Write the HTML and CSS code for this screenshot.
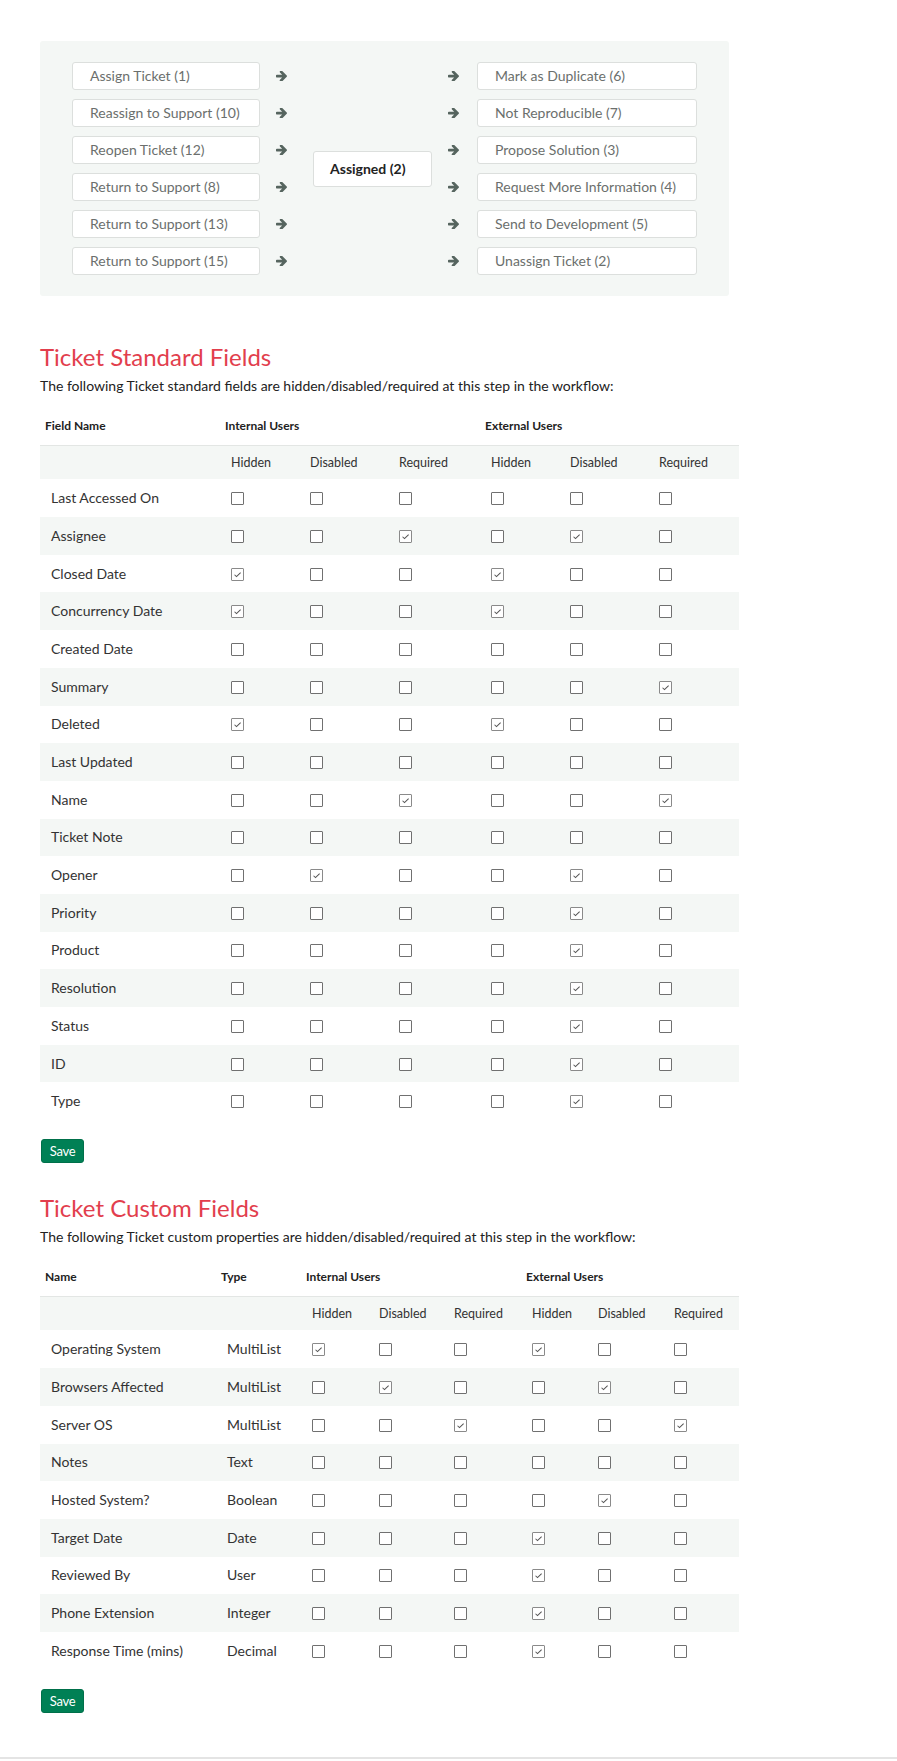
FILE: index.html
```html
<!DOCTYPE html>
<html>
<head>
<meta charset="utf-8">
<link rel="stylesheet" href="styles.css">
</head>
<body>
<div class="page">
  <div class="flow">
    <div class="col boxes left">
      <div class="box">Assign Ticket (1)</div>
      <div class="box">Reassign to Support (10)</div>
      <div class="box">Reopen Ticket (12)</div>
      <div class="box">Return to Support (8)</div>
      <div class="box">Return to Support (13)</div>
      <div class="box">Return to Support (15)</div>
    </div>
    <div class="col arrows a1">
      <div class="arr"><svg viewBox="0 144 1472 1376"><path d="M1472 832q0 54-37 91l-651 651q-39 37-91 37-51 0-90-37l-75-75q-38-38-38-91t38-91l293-293h-704q-52 0-84.5-37.5t-32.5-90.5v-128q0-53 32.5-90.5t84.5-37.5h704l-293-294q-38-36-38-90t38-90l75-75q38-38 90-38 53 0 91 38l651 651q37 35 37 90z"/></svg></div>
      <div class="arr"><svg viewBox="0 144 1472 1376"><path d="M1472 832q0 54-37 91l-651 651q-39 37-91 37-51 0-90-37l-75-75q-38-38-38-91t38-91l293-293h-704q-52 0-84.5-37.5t-32.5-90.5v-128q0-53 32.5-90.5t84.5-37.5h704l-293-294q-38-36-38-90t38-90l75-75q38-38 90-38 53 0 91 38l651 651q37 35 37 90z"/></svg></div>
      <div class="arr"><svg viewBox="0 144 1472 1376"><path d="M1472 832q0 54-37 91l-651 651q-39 37-91 37-51 0-90-37l-75-75q-38-38-38-91t38-91l293-293h-704q-52 0-84.5-37.5t-32.5-90.5v-128q0-53 32.5-90.5t84.5-37.5h704l-293-294q-38-36-38-90t38-90l75-75q38-38 90-38 53 0 91 38l651 651q37 35 37 90z"/></svg></div>
      <div class="arr"><svg viewBox="0 144 1472 1376"><path d="M1472 832q0 54-37 91l-651 651q-39 37-91 37-51 0-90-37l-75-75q-38-38-38-91t38-91l293-293h-704q-52 0-84.5-37.5t-32.5-90.5v-128q0-53 32.5-90.5t84.5-37.5h704l-293-294q-38-36-38-90t38-90l75-75q38-38 90-38 53 0 91 38l651 651q37 35 37 90z"/></svg></div>
      <div class="arr"><svg viewBox="0 144 1472 1376"><path d="M1472 832q0 54-37 91l-651 651q-39 37-91 37-51 0-90-37l-75-75q-38-38-38-91t38-91l293-293h-704q-52 0-84.5-37.5t-32.5-90.5v-128q0-53 32.5-90.5t84.5-37.5h704l-293-294q-38-36-38-90t38-90l75-75q38-38 90-38 53 0 91 38l651 651q37 35 37 90z"/></svg></div>
      <div class="arr"><svg viewBox="0 144 1472 1376"><path d="M1472 832q0 54-37 91l-651 651q-39 37-91 37-51 0-90-37l-75-75q-38-38-38-91t38-91l293-293h-704q-52 0-84.5-37.5t-32.5-90.5v-128q0-53 32.5-90.5t84.5-37.5h704l-293-294q-38-36-38-90t38-90l75-75q38-38 90-38 53 0 91 38l651 651q37 35 37 90z"/></svg></div>
    </div>
    <div class="col center">
      <div class="state">Assigned (2)</div>
    </div>
    <div class="col arrows a2">
      <div class="arr"><svg viewBox="0 144 1472 1376"><path d="M1472 832q0 54-37 91l-651 651q-39 37-91 37-51 0-90-37l-75-75q-38-38-38-91t38-91l293-293h-704q-52 0-84.5-37.5t-32.5-90.5v-128q0-53 32.5-90.5t84.5-37.5h704l-293-294q-38-36-38-90t38-90l75-75q38-38 90-38 53 0 91 38l651 651q37 35 37 90z"/></svg></div>
      <div class="arr"><svg viewBox="0 144 1472 1376"><path d="M1472 832q0 54-37 91l-651 651q-39 37-91 37-51 0-90-37l-75-75q-38-38-38-91t38-91l293-293h-704q-52 0-84.5-37.5t-32.5-90.5v-128q0-53 32.5-90.5t84.5-37.5h704l-293-294q-38-36-38-90t38-90l75-75q38-38 90-38 53 0 91 38l651 651q37 35 37 90z"/></svg></div>
      <div class="arr"><svg viewBox="0 144 1472 1376"><path d="M1472 832q0 54-37 91l-651 651q-39 37-91 37-51 0-90-37l-75-75q-38-38-38-91t38-91l293-293h-704q-52 0-84.5-37.5t-32.5-90.5v-128q0-53 32.5-90.5t84.5-37.5h704l-293-294q-38-36-38-90t38-90l75-75q38-38 90-38 53 0 91 38l651 651q37 35 37 90z"/></svg></div>
      <div class="arr"><svg viewBox="0 144 1472 1376"><path d="M1472 832q0 54-37 91l-651 651q-39 37-91 37-51 0-90-37l-75-75q-38-38-38-91t38-91l293-293h-704q-52 0-84.5-37.5t-32.5-90.5v-128q0-53 32.5-90.5t84.5-37.5h704l-293-294q-38-36-38-90t38-90l75-75q38-38 90-38 53 0 91 38l651 651q37 35 37 90z"/></svg></div>
      <div class="arr"><svg viewBox="0 144 1472 1376"><path d="M1472 832q0 54-37 91l-651 651q-39 37-91 37-51 0-90-37l-75-75q-38-38-38-91t38-91l293-293h-704q-52 0-84.5-37.5t-32.5-90.5v-128q0-53 32.5-90.5t84.5-37.5h704l-293-294q-38-36-38-90t38-90l75-75q38-38 90-38 53 0 91 38l651 651q37 35 37 90z"/></svg></div>
      <div class="arr"><svg viewBox="0 144 1472 1376"><path d="M1472 832q0 54-37 91l-651 651q-39 37-91 37-51 0-90-37l-75-75q-38-38-38-91t38-91l293-293h-704q-52 0-84.5-37.5t-32.5-90.5v-128q0-53 32.5-90.5t84.5-37.5h704l-293-294q-38-36-38-90t38-90l75-75q38-38 90-38 53 0 91 38l651 651q37 35 37 90z"/></svg></div>
    </div>
    <div class="col boxes right">
      <div class="box">Mark as Duplicate (6)</div>
      <div class="box">Not Reproducible (7)</div>
      <div class="box">Propose Solution (3)</div>
      <div class="box">Request More Information (4)</div>
      <div class="box">Send to Development (5)</div>
      <div class="box">Unassign Ticket (2)</div>
    </div>
  </div>

  <h2 class="title first">Ticket Standard Fields</h2>
  <p class="desc">The following Ticket standard fields are hidden/disabled/required at this step in the workflow:</p>
  <table class="grid std">
    <colgroup>
      <col style="width:180px"><col style="width:79px"><col style="width:89px"><col style="width:92px"><col style="width:79px"><col style="width:89px"><col style="width:91px">
    </colgroup>
    <thead>
      <tr class="head"><th>Field Name</th><th colspan="3">Internal Users</th><th colspan="3">External Users</th></tr>
    </thead>
    <tbody>
      <tr class="sub"><td></td><td>Hidden</td><td>Disabled</td><td>Required</td><td>Hidden</td><td>Disabled</td><td>Required</td></tr>
      <tr><td>Last Accessed On</td><td><span class="cb"></span></td><td><span class="cb"></span></td><td><span class="cb"></span></td><td><span class="cb"></span></td><td><span class="cb"></span></td><td><span class="cb"></span></td></tr>
      <tr><td>Assignee</td><td><span class="cb"></span></td><td><span class="cb"></span></td><td><span class="cb on"><svg viewBox="0 0 13 13"><path d="M3 6.8l2.3 2.2L10.2 4.2"/></svg></span></td><td><span class="cb"></span></td><td><span class="cb on"><svg viewBox="0 0 13 13"><path d="M3 6.8l2.3 2.2L10.2 4.2"/></svg></span></td><td><span class="cb"></span></td></tr>
      <tr><td>Closed Date</td><td><span class="cb on"><svg viewBox="0 0 13 13"><path d="M3 6.8l2.3 2.2L10.2 4.2"/></svg></span></td><td><span class="cb"></span></td><td><span class="cb"></span></td><td><span class="cb on"><svg viewBox="0 0 13 13"><path d="M3 6.8l2.3 2.2L10.2 4.2"/></svg></span></td><td><span class="cb"></span></td><td><span class="cb"></span></td></tr>
      <tr><td>Concurrency Date</td><td><span class="cb on"><svg viewBox="0 0 13 13"><path d="M3 6.8l2.3 2.2L10.2 4.2"/></svg></span></td><td><span class="cb"></span></td><td><span class="cb"></span></td><td><span class="cb on"><svg viewBox="0 0 13 13"><path d="M3 6.8l2.3 2.2L10.2 4.2"/></svg></span></td><td><span class="cb"></span></td><td><span class="cb"></span></td></tr>
      <tr><td>Created Date</td><td><span class="cb"></span></td><td><span class="cb"></span></td><td><span class="cb"></span></td><td><span class="cb"></span></td><td><span class="cb"></span></td><td><span class="cb"></span></td></tr>
      <tr><td>Summary</td><td><span class="cb"></span></td><td><span class="cb"></span></td><td><span class="cb"></span></td><td><span class="cb"></span></td><td><span class="cb"></span></td><td><span class="cb on"><svg viewBox="0 0 13 13"><path d="M3 6.8l2.3 2.2L10.2 4.2"/></svg></span></td></tr>
      <tr><td>Deleted</td><td><span class="cb on"><svg viewBox="0 0 13 13"><path d="M3 6.8l2.3 2.2L10.2 4.2"/></svg></span></td><td><span class="cb"></span></td><td><span class="cb"></span></td><td><span class="cb on"><svg viewBox="0 0 13 13"><path d="M3 6.8l2.3 2.2L10.2 4.2"/></svg></span></td><td><span class="cb"></span></td><td><span class="cb"></span></td></tr>
      <tr><td>Last Updated</td><td><span class="cb"></span></td><td><span class="cb"></span></td><td><span class="cb"></span></td><td><span class="cb"></span></td><td><span class="cb"></span></td><td><span class="cb"></span></td></tr>
      <tr><td>Name</td><td><span class="cb"></span></td><td><span class="cb"></span></td><td><span class="cb on"><svg viewBox="0 0 13 13"><path d="M3 6.8l2.3 2.2L10.2 4.2"/></svg></span></td><td><span class="cb"></span></td><td><span class="cb"></span></td><td><span class="cb on"><svg viewBox="0 0 13 13"><path d="M3 6.8l2.3 2.2L10.2 4.2"/></svg></span></td></tr>
      <tr><td>Ticket Note</td><td><span class="cb"></span></td><td><span class="cb"></span></td><td><span class="cb"></span></td><td><span class="cb"></span></td><td><span class="cb"></span></td><td><span class="cb"></span></td></tr>
      <tr><td>Opener</td><td><span class="cb"></span></td><td><span class="cb on"><svg viewBox="0 0 13 13"><path d="M3 6.8l2.3 2.2L10.2 4.2"/></svg></span></td><td><span class="cb"></span></td><td><span class="cb"></span></td><td><span class="cb on"><svg viewBox="0 0 13 13"><path d="M3 6.8l2.3 2.2L10.2 4.2"/></svg></span></td><td><span class="cb"></span></td></tr>
      <tr><td>Priority</td><td><span class="cb"></span></td><td><span class="cb"></span></td><td><span class="cb"></span></td><td><span class="cb"></span></td><td><span class="cb on"><svg viewBox="0 0 13 13"><path d="M3 6.8l2.3 2.2L10.2 4.2"/></svg></span></td><td><span class="cb"></span></td></tr>
      <tr><td>Product</td><td><span class="cb"></span></td><td><span class="cb"></span></td><td><span class="cb"></span></td><td><span class="cb"></span></td><td><span class="cb on"><svg viewBox="0 0 13 13"><path d="M3 6.8l2.3 2.2L10.2 4.2"/></svg></span></td><td><span class="cb"></span></td></tr>
      <tr><td>Resolution</td><td><span class="cb"></span></td><td><span class="cb"></span></td><td><span class="cb"></span></td><td><span class="cb"></span></td><td><span class="cb on"><svg viewBox="0 0 13 13"><path d="M3 6.8l2.3 2.2L10.2 4.2"/></svg></span></td><td><span class="cb"></span></td></tr>
      <tr><td>Status</td><td><span class="cb"></span></td><td><span class="cb"></span></td><td><span class="cb"></span></td><td><span class="cb"></span></td><td><span class="cb on"><svg viewBox="0 0 13 13"><path d="M3 6.8l2.3 2.2L10.2 4.2"/></svg></span></td><td><span class="cb"></span></td></tr>
      <tr><td>ID</td><td><span class="cb"></span></td><td><span class="cb"></span></td><td><span class="cb"></span></td><td><span class="cb"></span></td><td><span class="cb on"><svg viewBox="0 0 13 13"><path d="M3 6.8l2.3 2.2L10.2 4.2"/></svg></span></td><td><span class="cb"></span></td></tr>
      <tr><td>Type</td><td><span class="cb"></span></td><td><span class="cb"></span></td><td><span class="cb"></span></td><td><span class="cb"></span></td><td><span class="cb on"><svg viewBox="0 0 13 13"><path d="M3 6.8l2.3 2.2L10.2 4.2"/></svg></span></td><td><span class="cb"></span></td></tr>
    </tbody>
  </table>
  <button class="save">Save</button>

  <h2 class="title">Ticket Custom Fields</h2>
  <p class="desc">The following Ticket custom properties are hidden/disabled/required at this step in the workflow:</p>
  <table class="grid custom">
    <colgroup>
      <col style="width:176px"><col style="width:85px"><col style="width:67px"><col style="width:75px"><col style="width:78px"><col style="width:66px"><col style="width:76px"><col style="width:76px">
    </colgroup>
    <thead>
      <tr class="head"><th>Name</th><th>Type</th><th colspan="3">Internal Users</th><th colspan="3">External Users</th></tr>
    </thead>
    <tbody>
      <tr class="sub"><td></td><td></td><td>Hidden</td><td>Disabled</td><td>Required</td><td>Hidden</td><td>Disabled</td><td>Required</td></tr>
      <tr><td>Operating System</td><td>MultiList</td><td><span class="cb on"><svg viewBox="0 0 13 13"><path d="M3 6.8l2.3 2.2L10.2 4.2"/></svg></span></td><td><span class="cb"></span></td><td><span class="cb"></span></td><td><span class="cb on"><svg viewBox="0 0 13 13"><path d="M3 6.8l2.3 2.2L10.2 4.2"/></svg></span></td><td><span class="cb"></span></td><td><span class="cb"></span></td></tr>
      <tr><td>Browsers Affected</td><td>MultiList</td><td><span class="cb"></span></td><td><span class="cb on"><svg viewBox="0 0 13 13"><path d="M3 6.8l2.3 2.2L10.2 4.2"/></svg></span></td><td><span class="cb"></span></td><td><span class="cb"></span></td><td><span class="cb on"><svg viewBox="0 0 13 13"><path d="M3 6.8l2.3 2.2L10.2 4.2"/></svg></span></td><td><span class="cb"></span></td></tr>
      <tr><td>Server OS</td><td>MultiList</td><td><span class="cb"></span></td><td><span class="cb"></span></td><td><span class="cb on"><svg viewBox="0 0 13 13"><path d="M3 6.8l2.3 2.2L10.2 4.2"/></svg></span></td><td><span class="cb"></span></td><td><span class="cb"></span></td><td><span class="cb on"><svg viewBox="0 0 13 13"><path d="M3 6.8l2.3 2.2L10.2 4.2"/></svg></span></td></tr>
      <tr><td>Notes</td><td>Text</td><td><span class="cb"></span></td><td><span class="cb"></span></td><td><span class="cb"></span></td><td><span class="cb"></span></td><td><span class="cb"></span></td><td><span class="cb"></span></td></tr>
      <tr><td>Hosted System?</td><td>Boolean</td><td><span class="cb"></span></td><td><span class="cb"></span></td><td><span class="cb"></span></td><td><span class="cb"></span></td><td><span class="cb on"><svg viewBox="0 0 13 13"><path d="M3 6.8l2.3 2.2L10.2 4.2"/></svg></span></td><td><span class="cb"></span></td></tr>
      <tr><td>Target Date</td><td>Date</td><td><span class="cb"></span></td><td><span class="cb"></span></td><td><span class="cb"></span></td><td><span class="cb on"><svg viewBox="0 0 13 13"><path d="M3 6.8l2.3 2.2L10.2 4.2"/></svg></span></td><td><span class="cb"></span></td><td><span class="cb"></span></td></tr>
      <tr><td>Reviewed By</td><td>User</td><td><span class="cb"></span></td><td><span class="cb"></span></td><td><span class="cb"></span></td><td><span class="cb on"><svg viewBox="0 0 13 13"><path d="M3 6.8l2.3 2.2L10.2 4.2"/></svg></span></td><td><span class="cb"></span></td><td><span class="cb"></span></td></tr>
      <tr><td>Phone Extension</td><td>Integer</td><td><span class="cb"></span></td><td><span class="cb"></span></td><td><span class="cb"></span></td><td><span class="cb on"><svg viewBox="0 0 13 13"><path d="M3 6.8l2.3 2.2L10.2 4.2"/></svg></span></td><td><span class="cb"></span></td><td><span class="cb"></span></td></tr>
      <tr><td>Response Time (mins)</td><td>Decimal</td><td><span class="cb"></span></td><td><span class="cb"></span></td><td><span class="cb"></span></td><td><span class="cb on"><svg viewBox="0 0 13 13"><path d="M3 6.8l2.3 2.2L10.2 4.2"/></svg></span></td><td><span class="cb"></span></td><td><span class="cb"></span></td></tr>
    </tbody>
  </table>
  <button class="save">Save</button>
</div>
</body>
</html>
```

FILE: styles.css
```css
html, body {
  margin: 0;
  padding: 0;
  background: #ffffff;
}
body {
  font-family: Lato, "Open Sans", "Liberation Sans", sans-serif;
  font-size: 14px;
  color: #333333;
}
.page {
  padding: 41px 0 44px 40px;
  border-bottom: 2px solid #e4e4e4;
}
.flow {
  width: 625px;
  padding: 21px 32px;
  background: #f4f7f5;
  border-radius: 3px;
  display: flex;
  align-items: stretch;
}
.col {
  display: flex;
  flex-direction: column;
  gap: 9px;
}
.boxes.left { width: 188px; }
.boxes.right { width: 220px; margin-left: 18px; }
.box {
  box-sizing: border-box;
  height: 28px;
  line-height: 26px;
  padding-left: 17px;
  background: #ffffff;
  border: 1px solid #dcdfdd;
  border-radius: 3px;
  color: #6b6f6d;
  font-size: 14px;
  white-space: nowrap;
}
.arrows { width: 11px; }
.a1 { margin-left: 16px; }
.a2 { margin-left: 16px; }
.arr {
  height: 28px;
  display: flex;
  align-items: center;
}
.arr svg {
  width: 11px;
  height: 10.3px;
  fill: #56655f;
  display: block;
}
.center {
  margin-left: 26px;
  width: 119px;
  justify-content: center;
}
.state {
  box-sizing: border-box;
  height: 36px;
  line-height: 34px;
  padding-left: 16px;
  background: #ffffff;
  border: 1px solid #dcdfdd;
  border-radius: 3px;
  font-weight: 700;
  color: #222222;
  font-size: 14px;
}
.title {
  margin: 48px 0 0;
  font-size: 24px;
  line-height: 26.4px;
  font-weight: 400;
  color: #e23e4d;
}
.title + .desc { margin-top: 5.6px; }
.desc {
  margin: 0;
  line-height: 20px;
  color: #222222;
  font-size: 14px;
}
.grid {
  margin-top: 10px;
  border-collapse: collapse;
  table-layout: fixed;
  width: 699px;
}
.grid th {
  text-align: left;
  font-size: 12px;
  font-weight: 700;
  color: #222222;
  padding: 0 5px;
  height: 39px;
  border-bottom: 1px solid #e3e6e4;
}
.grid td {
  padding: 0 11px;
  height: 37.7px;
  line-height: 20px;
  vertical-align: middle;
  color: #333333;
  white-space: nowrap;
}
.grid tr.sub td {
  height: 33.4px;
  font-size: 12.5px;
  background: #f4f7f5;
}
.grid tbody tr:nth-child(odd) td { background: #f4f7f5; }
.cb {
  display: inline-block;
  box-sizing: border-box;
  width: 13px;
  height: 13px;
  border: 1px solid #707070;
  border-radius: 1px;
  background: #ffffff;
  vertical-align: middle;
  position: relative;
  top: -1px;
}
.cb.on { border-color: #8a8a8a; }
.cb svg {
  display: block;
  width: 11px;
  height: 11px;
  fill: none;
  stroke: #555555;
  stroke-width: 1.2;
  margin: 0;
}
.save {
  display: block;
  margin: 19px 0 0 1px;
  box-sizing: border-box;
  height: 24px;
  width: 43px;
  padding: 0;
  border: 1px solid #00704a;
  border-radius: 3px;
  background: #008055;
  color: #ffffff;
  font-family: Lato, "Open Sans", "Liberation Sans", sans-serif;
  font-size: 13px;
  letter-spacing: -0.3px;
}
.save + .title { margin-top: 32px; }
```
